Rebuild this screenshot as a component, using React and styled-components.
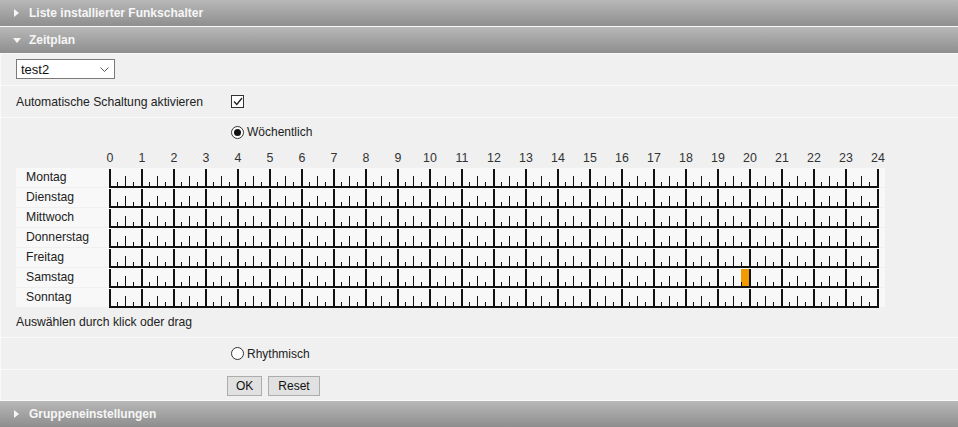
import React, { useState } from "react";
import styled, { createGlobalStyle } from "styled-components";

const GlobalStyle = createGlobalStyle`
	html, body {
		margin: 0;
		padding: 0;
		background: #f0f0f0;
		font-family: "Liberation Sans", Arial, sans-serif;
		font-size: 12px;
		color: #222;
	}
`;

const days = ["Montag", "Dienstag", "Mittwoch", "Donnerstag", "Freitag", "Samstag", "Sonntag"];
const hours = Array.from({ length: 25 }, (_, i) => i);

const Page = styled.div`
	display: flex;
	flex-direction: column;
	width: 958px;
	height: 427px;
	overflow: hidden;
`;

const Header = styled.div`
	display: flex;
	align-items: center;
	gap: 9px;
	height: 26px;
	padding-left: 13px;
	background: linear-gradient(#b8b8b8, #8e8e8e);
	border-bottom: 1px solid #fafafa;
	color: #f6f6f6;
	font-weight: bold;
	font-size: 12px;
	flex-shrink: 0;
`;

const Arrow = styled.span`
	width: 0;
	height: 0;
	${({ open }) =>
		open
			? `border-left: 4px solid transparent;
			   border-right: 4px solid transparent;
			   border-top: 5px solid #f6f6f6;
			   margin-right: -1px;`
			: `border-top: 4px solid transparent;
			   border-bottom: 4px solid transparent;
			   border-left: 5px solid #f6f6f6;
			   margin-left: 1px; margin-right: 1px;`}
`;

const Panel = styled.div`
	display: flex;
	flex-direction: column;
	border-left: 1px solid #fafafa;
`;

const Row = styled.div`
	display: flex;
	align-items: center;
	height: ${({ h }) => h || 31}px;
	padding-left: ${({ indent }) => indent || 15}px;
	border-bottom: 1px solid #fafafa;
	gap: ${({ gap }) => gap || 0}px;
`;

const SelectWrap = styled.div`
	position: relative;
	width: 99px;
	height: 20px;
	margin-top: -1px;
`;

const Select = styled.select`
	appearance: none;
	width: 100%;
	height: 100%;
	border: 1px solid #7a7a7a;
	background: #fff;
	font-family: "Liberation Sans", Arial, sans-serif;
	font-size: 13px;
	color: #111;
	padding: 0 0 0 4px;
	outline: none;
`;

const Chevron = styled.svg`
	position: absolute;
	right: 6px;
	top: 8px;
	pointer-events: none;
`;

const CheckLabel = styled.span`
	width: 215px;
	font-size: 12.2px;
`;

const Box = styled.span`
	display: inline-flex;
	align-items: center;
	justify-content: center;
	width: 11px;
	height: 11px;
	border: 1px solid #333;
	background: #fff;
`;

const Section = styled.div`
	display: flex;
	flex-direction: column;
	padding: 7px 0 0 15px;
	height: 212px;
	border-bottom: 1px solid #fafafa;
`;

const RadioLine = styled.label`
	display: flex;
	align-items: center;
	gap: 3px;
	padding-left: ${({ indent }) => indent || 215}px;
	color: #222;
`;

const RadioDot = styled.span`
	display: inline-flex;
	align-items: center;
	justify-content: center;
	width: 11px;
	height: 11px;
	border: 1px solid #333;
	border-radius: 50%;
	background: #fff;

	&::after {
		content: "";
		display: ${({ checked }) => (checked ? "block" : "none")};
		width: 7px;
		height: 7px;
		border-radius: 50%;
		background: #111;
	}
`;

const Grid = styled.div`
	display: flex;
	flex-direction: column;
	margin-top: 12px;
	width: 869px;
`;

const HourHead = styled.div`
	display: flex;
	height: 17px;
	padding-left: 94px;
`;

const HourLabel = styled.span`
	width: 32px;
	flex-shrink: 0;
	margin-left: ${({ first }) => (first ? -16 : 0)}px;
	text-align: center;
	color: #333;
	line-height: 14px;
	font-size: 12.4px;
`;

const DayRow = styled.div`
	display: flex;
	align-items: stretch;
	height: 19px;
	margin-bottom: 1px;
	background: #f8f8f8;
`;

const DayLabel = styled.span`
	width: 83px;
	padding-left: 10px;
	line-height: 18px;
	color: #222;
	font-size: 12.2px;
`;

const Track = styled.div`
	display: flex;
	margin-top: 1px;
	height: 19px;
	box-sizing: border-box;
	border-bottom: 2px solid #111;
	border-right: 2px solid #111;
`;

const Slot = styled.div`
	position: relative;
	width: 8px;
	height: 100%;
	background: ${({ on }) => (on ? "#f29b00" : "transparent")};
	cursor: pointer;

	&::before {
		content: "";
		position: absolute;
		left: 0;
		bottom: 0;
		width: ${({ tick }) => (tick === 0 ? 2 : 1)}px;
		background: #111;
		height: ${({ tick }) => (tick === 0 ? 17 : tick === 2 ? 10 : 4)}px;
	}
`;

const Hint = styled.div`
	margin-top: 7px;
	color: #222;
	font-size: 12.2px;
`;

const Button = styled.button`
	height: 20px;
	padding: 0 ${({ wide }) => (wide ? 9 : 8)}px;
	border: 1px solid #adadad;
	background: #e1e1e1;
	font-family: "Liberation Sans", Arial, sans-serif;
	font-size: 12px;
	color: #111;
	margin-top: 2px;
`;

const App = () => {
	const [selected, setSelected] = useState({ "Samstag-79": true });

	const toggle = (day, i) => {
		const key = `${day}-${i}`;
		setSelected((s) => ({ ...s, [key]: !s[key] }));
	};

	return (
		<>
			<GlobalStyle />
			<Page>
				<Header>
					<Arrow />
					Liste installierter Funkschalter
				</Header>
				<Header>
					<Arrow open />
					Zeitplan
				</Header>
				<Panel>
					<Row>
						<SelectWrap>
							<Select defaultValue="test2">
								<option>test2</option>
							</Select>
							<Chevron width="9" height="5" viewBox="0 0 9 5">
								<path d="M0.5 0.5 L4.5 4.5 L8.5 0.5" fill="none" stroke="#555" strokeWidth="1" />
							</Chevron>
						</SelectWrap>
					</Row>
					<Row>
						<CheckLabel>Automatische Schaltung aktivieren</CheckLabel>
						<Box>
							<svg width="10" height="9" viewBox="0 0 10 9">
								<path d="M1 4.5 L3.8 7.5 L9 1" fill="none" stroke="#222" strokeWidth="1.3" />
							</svg>
						</Box>
					</Row>
					<Section>
						<RadioLine>
							<RadioDot checked />
							Wöchentlich
						</RadioLine>
						<Grid>
							<HourHead>
								{hours.map((h) => (
									<HourLabel key={h} first={h === 0}>
										{h}
									</HourLabel>
								))}
							</HourHead>
							{days.map((day) => (
								<DayRow key={day}>
									<DayLabel>{day}</DayLabel>
									<Track>
										{Array.from({ length: 96 }, (_, i) => (
											<Slot
												key={i}
												tick={i % 4}
												on={selected[`${day}-${i}`]}
												onClick={() => toggle(day, i)}
											/>
										))}
									</Track>
								</DayRow>
							))}
						</Grid>
						<Hint>Auswählen durch klick oder drag</Hint>
					</Section>
					<Row>
						<RadioLine>
							<RadioDot />
							Rhythmisch
						</RadioLine>
					</Row>
					<Row h={30} indent={226} gap={6}>
						<Button>OK</Button>
						<Button wide>Reset</Button>
					</Row>
				</Panel>
				<Header>
					<Arrow />
					Gruppeneinstellungen
				</Header>
			</Page>
		</>
	);
};

export default App;
